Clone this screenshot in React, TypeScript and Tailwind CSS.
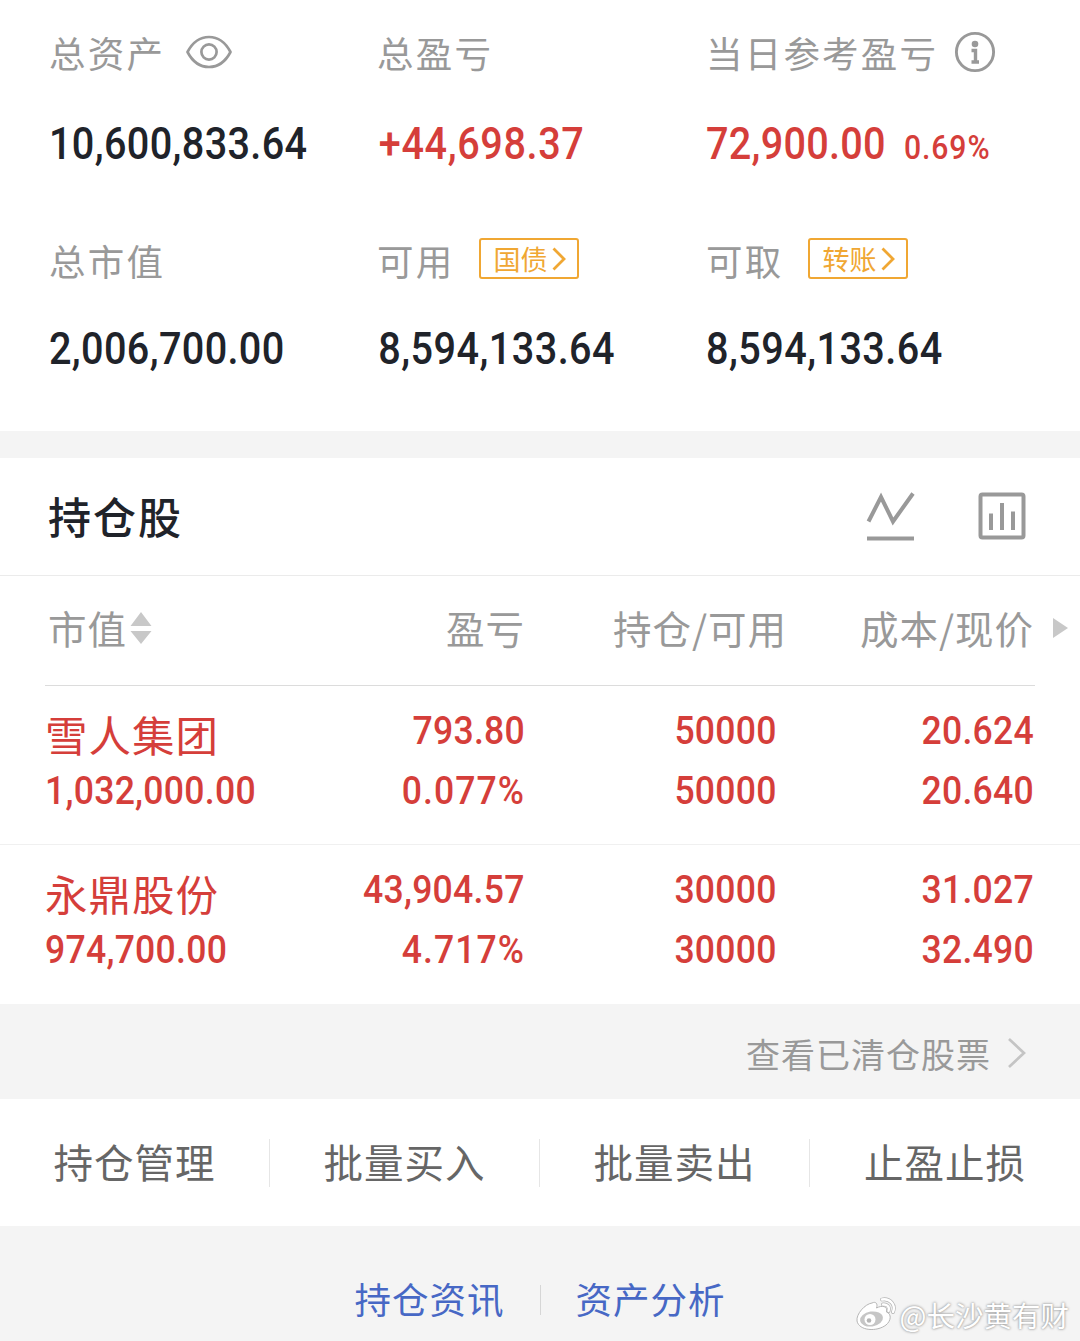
import type { ReactNode } from "react";

type NumProps = {
  children: string;
  className?: string;
  right?: boolean;
};

/* Condensed figures */
function Num({ children, className = "", right = false }: NumProps) {
  return (
    <span
      className={`block font-['Roboto'] font-medium whitespace-nowrap scale-x-90 ${right ? "origin-right" : "origin-left"} ${className}`}
    >
      {children}
    </span>
  );
}

const BIG = "text-[44px] leading-[48px]";
const MID = "text-[39.5px] leading-[48px]";

function Label({ children }: { children: ReactNode }) {
  return (
    <div className="flex h-10 items-center text-[36.5px] leading-10 tracking-[2.2px] whitespace-nowrap text-[#999999]">
      {children}
    </div>
  );
}

function Tag({ children }: { children: string }) {
  return (
    <span className="relative -top-[2.5px] ml-[25px] flex h-[41px] w-[100px] items-center rounded-[3px] border-[2.500px] border-[#f0a733] pl-[12px] text-[27px] tracking-normal text-[#f0a733]">
      {children}
      <svg className="ml-[5px]" width="15" height="24" viewBox="0 0 15 24" fill="none" stroke="currentColor" strokeWidth="2.8">
        <path d="M1.500 1.500 12 12 1.500 22.500" />
      </svg>
    </span>
  );
}

function EyeIcon() {
  return (
    <svg className="relative -top-px ml-[20px]" width="48" height="36" viewBox="0 0 48 36" fill="none" stroke="#999999" strokeWidth="2.7">
      <path d="M2.500 18C7.500 8.500 15 3 24 3S40.500 8.500 45.500 18C40.500 27.500 33 33 24 33S7.500 27.500 2.500 18Z" strokeLinejoin="round" />
      <circle cx="24" cy="18" r="7.600" />
    </svg>
  );
}

function InfoIcon() {
  return (
    <svg className="relative -top-px ml-[16px]" width="42" height="42" viewBox="0 0 42 42" fill="none" stroke="#999999">
      <circle cx="21" cy="21" r="18.600" strokeWidth="2.900" />
      <circle cx="21" cy="13" r="3.300" fill="#999999" stroke="none" />
      <path d="M17.500 19.500H21.500V31M17.500 31H25" strokeWidth="3.400" />
    </svg>
  );
}

const stocks = [
  { name: "雪人集团", value: "1,032,000.00", profit: "793.80", rate: "0.077%", held: "50000", usable: "50000", cost: "20.624", price: "20.640" },
  { name: "永鼎股份", value: "974,700.00", profit: "43,904.57", rate: "4.717%", held: "30000", usable: "30000", cost: "31.027", price: "32.490" },
];

function Pair({ a, b }: { a: string; b: string }) {
  return (
    <div className="flex flex-col items-end gap-3 pt-[20.500px]">
      <Num right className={`tracking-[0.3px] ${MID}`}>{a}</Num>
      <Num right className={`${b.endsWith("%") ? "tracking-[1.2px]" : "tracking-[0.3px]"} ${MID}`}>{b}</Num>
    </div>
  );
}

export default function App() {
  return (
    <div className="relative h-[1341px] w-[1080px] overflow-hidden bg-[#f4f4f4] font-['Noto_Sans_CJK_SC',sans-serif] text-[#20232a]">
      <section className="grid h-[431px] grid-cols-[328px_329px_374px] grid-rows-[136px_auto] content-start gap-y-[72px] bg-white pt-[33px] pl-[49px]">
        <div>
          <Label>总资产<EyeIcon /></Label>
          <Num className={`mt-[47px] tracking-[0.4px] ${BIG}`}>10,600,833.64</Num>
        </div>
        <div>
          <Label>总盈亏</Label>
          <Num className={`mt-[47px] pl-[2px] tracking-[0.7px] text-[#d53e3a] ${BIG}`}>+44,698.37</Num>
        </div>
        <div>
          <Label>当日参考盈亏<InfoIcon /></Label>
          <div className="mt-[47px] flex text-[#d53e3a]">
            <Num className={`w-[198px] tracking-[0.3px] ${BIG}`}>72,900.00</Num>
            <Num className="pt-[4px] text-[33.500px] leading-[48px] tracking-[1px]">0.69%</Num>
          </div>
        </div>
        <div>
          <Label>总市值</Label>
          <Num className={`mt-[44px] tracking-[0.4px] ${BIG}`}>2,006,700.00</Num>
        </div>
        <div>
          <Label>可用<Tag>国债</Tag></Label>
          <Num className={`mt-[44px] pl-[1.500px] tracking-[0.5px] ${BIG}`}>8,594,133.64</Num>
        </div>
        <div>
          <Label>可取<Tag>转账</Tag></Label>
          <Num className={`mt-[44px] tracking-[0.5px] ${BIG}`}>8,594,133.64</Num>
        </div>
      </section>

      <section className="mt-[27px] bg-white">
        <header className="flex h-[118px] items-center border-b border-[#ebebeb] pr-[54px] pb-[2px] pl-[48px]">
          <h2 className="flex-1 text-[43px] font-medium tracking-[2px]">持仓股</h2>
          <svg className="mr-[1px]" width="50" height="52" viewBox="0 0 50 52" fill="none" stroke="#999999" strokeWidth="4">
            <path d="M2.500 31.500 15 7 27 31.500 47 3.500M1 48.500H48" />
          </svg>
          <svg className="ml-[61px]" width="48" height="48" viewBox="0 0 48 48" fill="none" stroke="#999999" strokeWidth="4">
            <rect x="2.500" y="2.500" width="43" height="43" rx="2" />
            <path d="M13 21.500V38M24 11V38M35 19.500V38" />
          </svg>
        </header>

        <div className="relative grid h-[110px] grid-cols-[216px_264px_262px_247px_1fr] items-center pb-[7px] pl-[45px] text-[38.500px] tracking-[1px] text-[#999999]">
          <span className="flex items-center pl-[3px]">
            市值
            <svg className="ml-[3px]" width="22" height="34" viewBox="0 0 22 34" fill="#c8c8c8">
              <path d="M11 1 21.500 15H.5ZM11 33 21.500 20H.5Z" />
            </svg>
          </span>
          <span className="text-right">盈亏</span>
          <span className="text-right">持仓/可用</span>
          <span className="text-right">成本/现价</span>
          <svg className="ml-[19px]" width="15" height="20" viewBox="0 0 15 20" fill="#c8c8c8">
            <path d="M0 0 15 10 0 20Z" />
          </svg>
          <div className="absolute right-[45px] bottom-0 left-[45px] h-px bg-[#dcdcdc]" />
        </div>

        {stocks.map((s) => (
          <div
            key={s.name}
            className="grid h-[159px] grid-cols-[210px_270px_252px_257px] border-b border-[#f0f0f0] pl-[45px] text-[#d53e3a] last:border-b-0"
          >
            <div className="pt-[24px]">
              <div className="h-[48px] text-[42.500px] leading-[48px] tracking-[1px] whitespace-nowrap">{s.name}</div>
              <Num className={`mt-[8.500px] tracking-[0.3px] ${MID}`}>{s.value}</Num>
            </div>
            <Pair a={s.profit} b={s.rate} />
            <Pair a={s.held} b={s.usable} />
            <Pair a={s.cost} b={s.price} />
          </div>
        ))}
      </section>

      <div className="flex h-[95px] items-center justify-end pt-[3px] pr-[54px] text-[34px] tracking-[1px] text-[#999999]">
        查看已清仓股票
        <svg className="ml-[16px]" width="19" height="32" viewBox="0 0 19 32" fill="none" stroke="#c4c4c4" strokeWidth="2.700">
          <path d="M2 2 17 16 2 30" />
        </svg>
      </div>

      <nav className="grid h-[127px] grid-cols-4 items-center bg-white text-[39.500px] tracking-[1px] text-[#666666]">
        {["持仓管理", "批量买入", "批量卖出", "止盈止损"].map((t) => (
          <div key={t} className="flex h-[48px] items-center justify-center border-r border-[#e6e6e6] pb-[3px] last:border-r-0">
            {t}
          </div>
        ))}
      </nav>

      <div className="flex h-[115px] items-center justify-center pt-[32px] text-[36.500px] tracking-[1px] text-[#4768c5]">
        <span>持仓资讯</span>
        <i className="mx-[35px] h-[30px] w-px bg-[#d6d6d6]" />
        <span>资产分析</span>
      </div>

      <div className="absolute right-[11px] bottom-[6px] flex h-[40px] items-center text-[28.500px] text-white [text-shadow:0_0_3px_#999,0_0_2px_#aaa]">
        <svg className="mr-[3px]" width="42" height="36" viewBox="0 0 42 36" fill="none">
          <path d="M17 6C21 4 23 7 21.500 11C27 8 33 9 31.500 15C37 17 36 24 31 28C22 35 4 34 2 24C1 17 10 7 17 6Z" fill="#fff" stroke="#b5b5b5" strokeWidth="1" />
          <ellipse cx="16.500" cy="22" rx="11.500" ry="7.500" fill="#c6c6c6" transform="rotate(-8 16.500 22)" />
          <circle cx="15" cy="22.500" r="5.500" fill="#fff" />
          <circle cx="14" cy="23.500" r="2.300" fill="#b5b5b5" />
          <path d="M27 2.500C35 1 41 8 38 15M28 7.500C32 7 35 10 33.500 14" stroke="#b5b5b5" strokeWidth="3.800" strokeLinecap="round" />
          <path d="M27 2.500C35 1 41 8 38 15M28 7.500C32 7 35 10 33.500 14" stroke="#fff" strokeWidth="2.400" strokeLinecap="round" />
        </svg>
        @长沙黄有财
      </div>
    </div>
  );
}
